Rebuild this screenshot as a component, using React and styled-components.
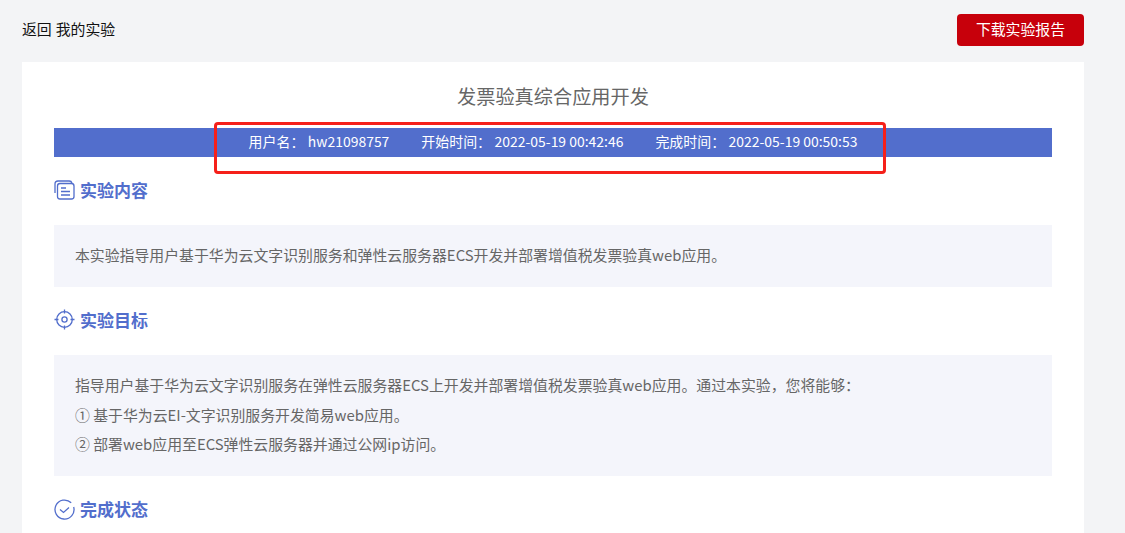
import React from "react";
import styled, { createGlobalStyle } from "styled-components";

const Global = createGlobalStyle`
  html, body { margin: 0; padding: 0; height: 533px; overflow: hidden; background: #f3f4f6; }
  body { font-family: "Microsoft YaHei", "Noto Sans CJK SC", "Liberation Sans", sans-serif; }
`;
const Page = styled.div`
  position: relative;
  width: 1125px;
  height: 533px;
  overflow: hidden;
  padding: 0 41px 0 22px;
  box-sizing: border-box;
`;
const TopBar = styled.header`
  height: 62px;
  display: flex;
  justify-content: space-between;
  align-items: flex-start;
`;
const Crumbs = styled.div`
  display: flex;
  gap: 4px;
  margin-top: 19px;
  font-size: 14.88px;
  line-height: 20px;
  color: #111;
`;
const ReportButton = styled.button`
  width: 127px;
  height: 32px;
  margin-top: 14px;
  border: 0;
  border-radius: 4px;
  background: #c7000b;
  color: #fff;
  font: inherit;
  font-size: 14.88px;
  line-height: 30px;
  padding: 0 0 2px;
`;
const Card = styled.main`
  background: #fff;
  padding: 20px 32px 0;
  height: 600px;
  box-sizing: border-box;
`;
const Title = styled.h1`
  margin: 0;
  height: 46px;
  text-align: center;
  font-size: 19.2px;
  line-height: 28px;
  font-weight: 400;
  color: #666;
`;
const Banner = styled.div`
  height: 29px;
  background: #526ecc;
  color: #fff;
  font-size: 13.95px;
  line-height: 27px;
  display: flex;
  justify-content: center;
  align-items: flex-start;
  gap: 32px;
`;
const Meta = styled.span`
  display: flex;
  gap: 3.5px;
  white-space: nowrap;
`;
const SectionHead = styled.div`
  display: flex;
  align-items: center;
  gap: 5px;
  height: 24px;
  margin: 21px 0 23px;
  color: #526ecc;
  font-size: 17px;
  line-height: 22px;
  font-weight: 700;
`;
const Box = styled.div`
  background: #f4f5fb;
  padding: 16px 21px;
  font-size: 14.88px;
  line-height: 29.76px;
  color: #666;
`;
const Line = styled.div`
  white-space: nowrap;
  margin-top: -1px;
  margin-bottom: 1px;
`;
const Highlight = styled.div`
  position: absolute;
  left: 214px;
  top: 122px;
  width: 672px;
  height: 52px;
  box-sizing: border-box;
  border: 3px solid #f5201a;
  border-radius: 4px;
  pointer-events: none;
`;
const Icon = styled.svg`
  width: 21px;
  height: 21px;
  flex: none;
  fill: none;
  stroke: #526ecc;
  stroke-width: 1.3;
`;

const ContentIcon = () => (
  <Icon viewBox="0 0 21 21">
    <path d="M1 13V4a3 3 0 0 1 3-3h11a3 3 0 0 1 3 2" />
    <rect x="3.5" y="3.5" width="16.5" height="15.5" rx="2.5" />
    <path d="M7 8h5M7 11.500h9M7 15h9" />
  </Icon>
);
const TargetIcon = () => (
  <Icon viewBox="0 0 21 21">
    <circle cx="10.500" cy="10.500" r="7.800" />
    <circle cx="10.500" cy="10.500" r="2.600" />
    <path d="M10.500 .5v4M10.500 16.500v4M.5 10.500h4M16.500 10.500h4" />
  </Icon>
);
const DoneIcon = () => (
  <Icon viewBox="0 0 21 21">
    <path d="M17.200 3.800A9.500 9.500 0 1 0 19.680 8.040" />
    <path d="M6 10.500l3.500 3 5.500-5" />
  </Icon>
);

export default function App() {
  return (
    <Page>
      <Global />
      <TopBar>
        <Crumbs>
          <span>返回</span>
          <span>我的实验</span>
        </Crumbs>
        <ReportButton>下载实验报告</ReportButton>
      </TopBar>
      <Card>
        <Title>发票验真综合应用开发</Title>
        <Banner>
          <Meta><span>用户名：</span><span>hw21098757</span></Meta>
          <Meta><span>开始时间：</span><span>2022-05-19 00:42:46</span></Meta>
          <Meta><span>完成时间：</span><span>2022-05-19 00:50:53</span></Meta>
        </Banner>
        <SectionHead><ContentIcon />实验内容</SectionHead>
        <Box>
          <Line>本实验指导用户基于华为云文字识别服务和弹性云服务器ECS开发并部署增值税发票验真web应用。</Line>
        </Box>
        <SectionHead><TargetIcon />实验目标</SectionHead>
        <Box>
          <Line>指导用户基于华为云文字识别服务在弹性云服务器ECS上开发并部署增值税发票验真web应用。通过本实验，您将能够：</Line>
          <Line>① 基于华为云EI-文字识别服务开发简易web应用。</Line>
          <Line>② 部署web应用至ECS弹性云服务器并通过公网ip访问。</Line>
        </Box>
        <SectionHead><DoneIcon />完成状态</SectionHead>
      </Card>
      <Highlight />
    </Page>
  );
}
